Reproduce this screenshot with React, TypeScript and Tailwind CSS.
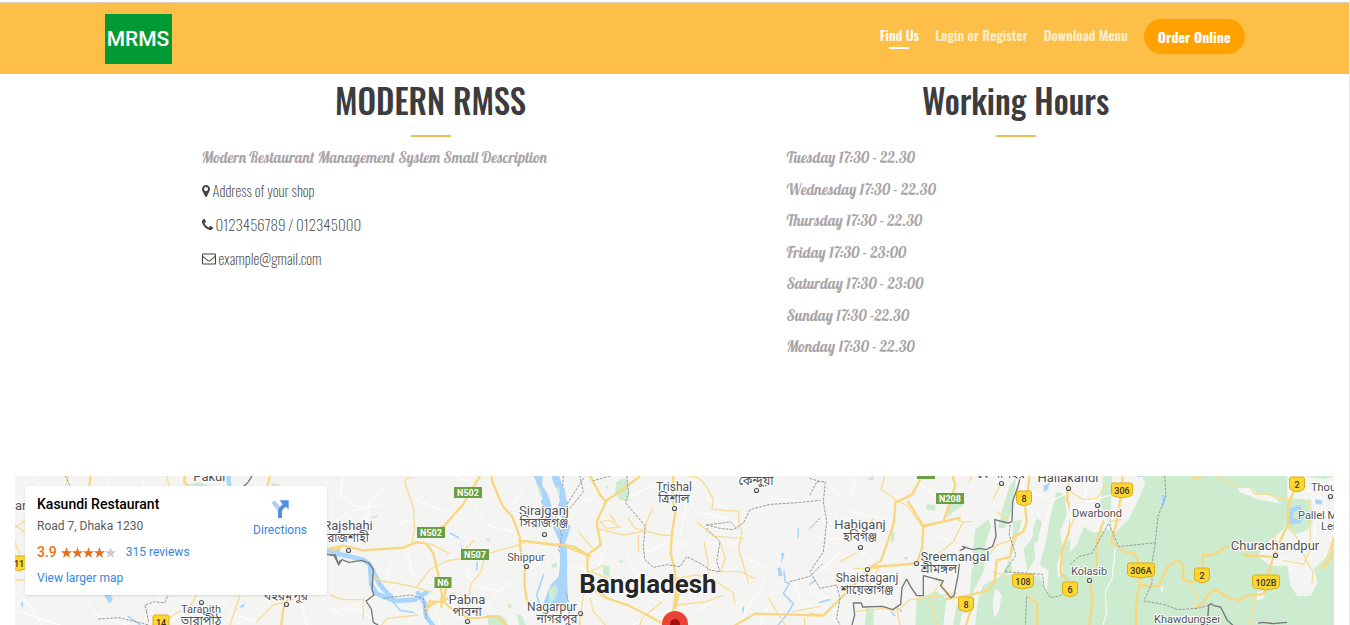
import type { ReactNode } from "react";

const navLinks = [
  { label: "Find Us", href: "#find-us", active: true },
  { label: "Login or Register", href: "#login", active: false },
  { label: "Download Menu", href: "#menu", active: false },
];

const workingHours = [
  "Tuesday 17:30 - 22.30",
  "Wednesday 17:30 - 22.30",
  "Thursday 17:30 - 22.30",
  "Friday 17:30 - 23:00",
  "Saturday 17:30 - 23:00",
  "Sunday 17:30 -22.30",
  "Monday 17:30 - 22.30",
];

interface Tile {
  x: number;
  land?: string[];
  green?: string[];
  water?: string[];
  broad?: string[];
  islands?: string[];
  rivers?: string[];
  street?: string[];
  minor?: string[];
  major?: string[];
  dashed?: string[];
  border?: string[];
}

const tiles: Tile[] = [
  {
    x: 0,
    green: ["M815 52l24 6-2 10h-24z", "M560 60l40-8 30 12h-60z"],
    water: [
      "M678 33h14l2 30h-12z",
      "M312 390l20-4 6 18-10 12z",
      "M64 410l6 2-2 18-4-6z",
      "M716 426l20-12-6 14z",
      "M976 250l44 4v22l-30-6z",
    ],
    rivers: ["M385 455l30 20 10 10", "M810 404l16-14"],
    street: [
      "M90 33l30 30M330 33l-10 30M420 33l14 30M60 440l120 40",
      "M250 390l40 60 90 30M480 390l-30 60M900 390l20 90M960 390l60 60",
      "M45 380l60 60 20 40M660 390l40 60 80 20",
    ],
    minor: [
      "M205 33l-8 30M500 33l8 30",
      "M45 190l30-24M45 180l30 22M45 345h30M45 232l14 36",
      "M720 390l-20 60-10 30M770 470l50-50 60-16M590 390l-20 34-40 20-30 20",
    ],
    major: [
      "M272 33l-4 30M556 33q-10 20 10 30M810 33l-8 30",
      "M870 390l-20 40-6 50",
      "M980 262l40-12",
    ],
    dashed: [
      "M196 33l14 30",
      "M296 462l60-4 60 14 30 8M440 440l-6-20 30-10 30 4 10-24M440 440l6 30",
    ],
    border: ["M756 33q-10 20-24 30", "M980 268l22 4 14 26 4-12"],
  },
  {
    x: 330,
    green: [
      "M115 158l34-10-14 12z",
      "M466 222l16-4-4 12z",
      "M470 450l40 0 20 14 0 16h-54z",
      "M528 418l18 0-4 14z",
      "M560 446l14 4 14 30h-20z",
    ],
    water: [
      "M612 33h26l-2 28 14 20 14 38-4 30-22-46-12-30z",
      "M664 33h24l12 40 8 30-4 40-12-24-8-40-12-20z",
      "M690 300l20-4 2 60 2 50-10 24-44 10-20-26 22-54 24-26z",
      "M390 230l8 22-2 8z",
      "M440 168l-2-4 6 8z",
    ],
    broad: [
      "M0 262l50 10 50 12 20 14 4 60 16 28 54 22 60-4 36-22",
      "M120 300l30 60 40 44M264 384l20 30 4 40 20 26",
      "M640 110l14 34 20 36 22 50M706 110l-4 60-4 60 4 40-4 40",
      "M714 186l-12 40",
    ],
    islands: [
      "M656 372l22-14 6 20-14 30-12 6z",
      "M664 298l18-6-2 14-14 4z",
      "M624 60l8 10 6 30-10-14z",
      "M680 60l8 10 4 26-8-6z",
    ],
    rivers: ["M360 204l26 14", "M442 290l-2 24", "M190 412l20 24 40 6", "M640 330l-20 60 20 60"],
    street: [
      "M40 33l-10 60 70 40M0 180l60-40 90-20 60-60",
      "M160 60l-40 60-20 100M250 100l100 40M260 160l-60 20",
      "M190 280l-20 40 10 30M230 260l20 70 40 10",
      "M430 120l40 60 80 20M470 250l60 20M400 300l30 60 90 20",
      "M590 60l-40 60M600 250l-10 60M720 300l60 20M380 33l60 30",
      "M330 480l-10-40M400 420l-40-50M500 380l-30 50M560 340l-60 40",
      "M140 470l-60-40-80 10",
    ],
    minor: [
      "M250 38q-30-2-24 20l24 70 4 60-8 46",
      "M300 236l60 30",
      "M260 366l40-52 50-26 100-16 110-30 30-14 100 10",
      "M128 320q0 20 30 28l80 14 70 20",
      "M0 390l40 14h60M100 400l0 60",
      "M468 262l-16 60-30 36-10 70",
      "M432 226l-30 30M154 480l20-20 90-10",
      "M748 480l12-90 20-30",
    ],
    major: [
      "M0 250l40-8 60 14 120-8 40-16 30 4 20 30 14 60 12 60-2 40",
      "M450 33l-50 84-60 68",
      "M484 33l4 20 30 70 30 34 22 60 0 28 14 60 0 60 10 60",
      "M300 410l40 0 30-24M290 436l10-30M340 410l40 34 40 16 80-6 30 26",
      "M566 226l140 18 50 20 24 10",
      "M342 400l10-50M340 185l-40 20M290 430l30-20",
    ],
    dashed: ["M700 33l-4 60-20 60 20 60-10 40 20 50-2 60 14 60 0 60", "M760 40l-50 80", "M160 400l80-10 40 10 10 60"],
    border: ["M0 270h16l10 30 10-16 20 8 40-6 20 8 14 20-4 60 6 16-24 18 16 24 6 40 14 8"],
  },
  {
    x: 560,
    green: [
      "M168 52l26-14 12 20 2 50-30-4-12-20z",
      "M128 304l20-2v34l-18-6z",
      "M136 60l8 4-2 10z",
      "M172 288l16-2 0 8z",
    ],
    water: [
      "M0 60l14 10 6 50-20 20z",
      "M0 240l20-4 2 60-4 60 2 50-20 24z",
      "M712 190h5v28l-4 2z",
      "M664 262l10 4-10 28zM652 310l10-4 6 28-12 0z",
      "M546 430l6-8 0 18-4 4z",
    ],
    rivers: ["M24 190l-10 30-8 20", "M672 320l4 30 12 6-18 30 30 30-20 34-26 30"],
    street: [
      "M60 110l40-10 40 40M200 100l80-40 60 40M350 60l60 80 100 20",
      "M420 60l-40 60-20 90M260 260l70-30 60 10M440 100l60 30",
      "M520 60l60-20 60 60 90 10M560 180l-40 60-90-10",
      "M620 340l-60 90-20 50M700 330l20 80 60 20M400 440l60-30",
      "M140 240l-40 100M60 300l60 80M200 270l30 60 80 20M540 270l80 40",
      "M220 480l60-40 60 30M600 480l30-70",
    ],
    minor: [
      "M120 170l30-4 30 20-40 4zM150 150l16 20M110 190l80 20 60-10 14-40 14-30",
      "M205 160l20 30 80 20 28 2M234 210l2 50",
      "M58 204l40 46M92 320l50 20M130 300l-46 24",
      "M388 33q30 0 50 30l22 40-4 30 80 6 0 36 10 20-10 60 10 30 20 70",
      "M410 170l50 44 90 6M432 230l12 60 0 40M480 230l16 50-14 40 60 0 40 20",
      "M350 340l60-10 50 14 60 40 4 30M350 420l90-10 50-20",
      "M240 480l6-20 60-50M626 400l30 50 20 30M734 480l0-20",
      "M60 440l0 40M700 440l80-16",
      "M90 400l10 40 36 40",
    ],
    major: [
      "M90 33l30 56 16 20 36-24 66-50",
      "M138 110l-28 60 12 70-40 30 0 44 20 60 40 26 60 20 60 30 60 34",
      "M340 33l-4 60 10 50-10 60-4 60 14 60 2 60-14 96",
      "M0 240l40 4 44 26",
      "M526 480l60-34 90 2 104 4",
      "M360 370l-14 60",
    ],
    dashed: [
      "M200 33l6 50-10 30 60 70-6 60 4 40 26 24 40-8 40 6 20-30 40 20 30 20 30 6",
      "M440 180l40 10 40 4 30-20 20-40 60-16 70-4 80-8M440 190l40 40-10 60 10 30",
      "M440 180l50-6 20-4 20 20",
      "M30 130l40-50-10-46M150 33l-50 14",
      "M780 160l-30 30M690 350l60-16 40-40M750 40l30 10",
    ],
  },
  {
    x: 810,
    green: [
      "M352 116l26 6-4 16-26-6z",
      "M176 36l16-3-2 12h-16z",
      "M244 200l10 0-4 30-8 4z",
      "M280 276h14l-4 16z",
      "M420 110l40-10 0 20-30 20-20 20z",
      "M600 60l18-20-10 90-24 60-20 0 14-60z",
      "M495 195l40-32 8 20-16 50-4 80-24 50-20 36 6-90z",
      "M610 170l30-8 4 50-40 110-30 10 30-60z",
      "M740 80l24 10 6 60-20 50 10 60-40 60-30-20 20-80 10-60z",
      "M680 160l16 10-14 60-20 10 4-40z",
      "M640 250l30-30 6 60-24 40z",
      "M320 400l60-20 30 20-10 80h-84z",
      "M170 430l20 0 0 50h-26z",
      "M520 360l60-30 60-4 50 10 24 50 40-10 56-96v200H495l10-80z",
      "M780 220l30-40v300h-110l20-200z",
      "M440 420l20 0-10 60h-20z",
    ],
    land: [
      "M556 370l20 20-10 50-14 20-4-50z",
      "M640 150l20 0 10 60-40 60-20 50-10-30z",
      "M740 300l14-40 6 60-16 20z",
      "M780 170l14-50 16-10v60z",
    ],
    water: ["M700 62l14-6 2 16-14 10z"],
    rivers: ["M0 358l16-12M30 412l30-8", "M710 66l10-14", "M244 442l10 10M264 430l10 8"],
    street: [
      "M60 60l60 80 100 20M140 33l-20 60M330 60l60 40 60 10",
      "M60 220l80 10 60 70M240 340l60-60M380 210l80 40 30 60",
      "M20 300l60 20M90 260l-60 60M480 60l60 60M400 300l-60 70",
      "M500 130l-60 60M640 33l0 60M720 110l60-30M40 420l60 20",
      "M700 200l20-80M620 60l90 40M0 380l60 20",
    ],
    minor: [
      "M224 33l-10 40 40 30 40 20 20 30 24 34",
      "M90 290l50-26M190 160l-20 30M484 33l-6 20",
      "M430 160l30 10 24 0M460 170l-30 60-50 40-60 20",
      "M560 140l30 20M570 60l-20 40M620 220l-60 20-40 50",
      "M130 310l70 0M100 390l70-20 40-66",
      "M130 440l90-10 40 10 40-36 80-10 60-10M380 370l-20 30 20 80",
      "M550 320l40 14M260 430l10 50M380 340l40 50",
      "M780 130l-10-40 10-57M810 140l-40-60",
    ],
    major: [
      "M336 33l-30 56-50 24-4 60-20 60-20 56-30 16",
      "M186 306l80-6 60-6",
      "M340 190l-4 60-14 40M294 110l26 40 20 34 60-14 20-60 16-50-8-27",
      "M340 182l60-12 50-12",
      "M0 446l40 6 60-60 60-60 20-24",
      "M658 33l-6 66M646 130l4 40-10 30-30 16-10 60-40 10-6 60-20 30-60 16-64 10",
      "M484 430l-16 50M656 396l26 20 0 64M774 64l-4 40 16 40-10 60-20 50-4 70 20 20",
    ],
    dashed: [
      "M0 90l20-40 26 0-6 60 10 60-10 90-40 60 30 50 50-10 10 40-10 60 10 20",
      "M600 180l-2 30 20 60-34 50 60 4 54 4 4 40 20 30 30-6 20-30 38-40",
      "M650 396l-4 84",
    ],
    border: [
      "M126 480l8-30-4-36 24 0 4 12 60-2 30 10 24-16 4-50 14-26 10 20 20 30 20 0 0-60 60 16-8 14 30 36 10-6 12-60 4-34",
      "M450 256l14-6-6-6 30 10 20-4 20 4 20-10 10-30-4-50 40 10 12-4 2-60 16-46 6-24",
    ],
  },
  {
    x: 1070,
    green: ["M0 33H792v447H0z"],
    land: [
      "M0 33h100l-10 90 30 50 0 20-50 10-70-40z",
      "M126 33h90l10 20-20 50-30 60-30 30-20 20-4-60z",
      "M0 130l40 60-20 50-20 20z",
      "M652 33l60 0 50 10 30-10v220l-60 60 10 40-20 40-40 0-20-30-10-60-50 0-40-30 30-40 50-40 10-60z",
      "M560 384l20-10 4 24-24 10z",
      "M500 66l40 0 24 20 50 6 16 24-70-14-50-20z",
      "M270 370l12-10-6 28z",
    ],
    islands: ["M630 120l30-20 60 4 10 60-20 34-40 10-30-30z"],
    water: ["M276 90l10 0 0 24-10 14z", "M772 98l8 0 0 10z", "M200 33h20l-14 4z"],
    broad: ["M664 136l22-8 10 24-8 16-26 2zM742 110l8 2"],
    street: [
      "M136 250l-10 90-20 40 4 60-10 40",
      "M0 90l60 20 60-20M160 130l-40 30M690 60l60 40M680 210l-60 60 60 30 60-30",
      "M740 130l-10 120M60 33l-20 70",
    ],
    minor: [
      "M0 80l40 24 40-4 30-40M120 170l34-6M610 200l10 40M660 180l30 60 20 50 20 30 -4 34",
      "M640 286l60 12 20-40 2-150M530 270l70 6M790 220l-30 90",
      "M440 33l40 20 20 14 40 0 14 20 40 0 30 14 30 0",
      "M355 360l26 30-10 40M540 480l10-60 10-30M0 190l20-50",
    ],
    major: [
      "M158 33l-6 60-8 60-20 80 20 10 20 20 30 0 14 40 0 60-10 60 0 57",
      "M100 170l-20 60 0 80M60 350l8 60-10 70",
      "M204 360l60 4 30-60 30-20 16 20 0 40 30 8 26-40",
      "M396 310l4-40 30 0 40-26 30 0M520 270l90 6-14 50-14 60-60 8-14 14-40-14-30-20-20 10-20 30-20 14",
      "M680 60l-26 60 0 60-20 40-20 50M792 220l-10 60-26 30",
      "M370 40l20-4",
    ],
    dashed: [
      "M284 33l4 60-24 60-8 80-110 12-30-70-50 90-40 10-26 24",
      "M256 234l-10 60 0 60-24 54 60 10 40 16 60-4 40-10",
    ],
    border: ["M412 480l4-60 8-4 8 6 20 4 20 40 16 14", "M566 474l14-2 30 4 40-4"],
  },
];

interface Place {
  x: number;
  y: number;
  text: string;
  size: number;
  bn?: string;
  bnX?: number;
  dot?: [number, number];
  start?: boolean;
}

const places: Place[] = [
  { x: 210, y: 481, text: "Pakur", size: 13 },
  { x: 15, y: 510, text: "ar", size: 13, start: true },
  { x: 348, y: 530, text: "Rajshahi", size: 13, bn: "রাজশাহী", dot: [348, 550] },
  { x: 286, y: 588, text: "", size: 13, bn: "বহরমপুর", dot: [286, 604] },
  { x: 201, y: 613, text: "Tarapith", size: 11, bn: "তারাপীঠ", dot: [201, 602] },
  { x: 544, y: 515, text: "Sirajganj", size: 13, bn: "সিরাজগঞ্জ", dot: [544, 534] },
  { x: 526, y: 561, text: "Shippur", size: 11, dot: [526, 566] },
  { x: 467, y: 604, text: "Pabna", size: 13, bn: "পাবনা", dot: [467, 621] },
  { x: 552, y: 611, text: "Nagarpur", size: 12, bn: "নাগরপুর", bnX: 557, dot: [580, 613] },
  { x: 674, y: 491, text: "Trishal", size: 12, bn: "ত্রিশাল", dot: [674, 508] },
  { x: 756, y: 473, text: "", size: 12, bn: "কেন্দুয়া", dot: [756, 490] },
  { x: 860, y: 529, text: "Habiganj", size: 13, bn: "হবিগঞ্জ", dot: [860, 547] },
  { x: 955, y: 561, text: "Sreemangal", size: 13, bn: "শ্রীমঙ্গল", bnX: 939, dot: [916, 563] },
  { x: 867, y: 582, text: "Shaistaganj", size: 12, bn: "শায়েস্তাগঞ্জ", dot: [867, 569] },
  { x: 1001, y: 466, text: "", size: 12, bn: "কৈলাশহর", dot: [1001, 483] },
  { x: 1068, y: 482, text: "Hailakandi", size: 13, dot: [1068, 488] },
  { x: 1097, y: 517, text: "Dwarbond", size: 11, dot: [1097, 505] },
  { x: 1089, y: 575, text: "Kolasib", size: 11, dot: [1089, 580] },
  { x: 1275, y: 550, text: "Churachandpur", size: 13, dot: [1275, 555] },
  { x: 1187, y: 623, text: "Khawdungsei", size: 11 },
  { x: 1311, y: 491, text: "Thoubal", size: 11, start: true, dot: [1330, 496] },
  { x: 1298, y: 519, text: "Pallel M", size: 11, start: true },
  { x: 1321, y: 530, text: "Lei", size: 11, start: true },
];

const nationalRoads = [
  { x: 468, y: 492, w: 28, text: "N502" },
  { x: 431, y: 532, w: 28, text: "N502" },
  { x: 475, y: 554, w: 28, text: "N507" },
  { x: 443, y: 582, w: 17, text: "N6" },
  { x: 950, y: 498, w: 28, text: "N208" },
  { x: 926, y: 473, w: 18, text: "" },
];

const shields = [
  { x: 19, y: 563, w: 15, text: "11" },
  { x: 161, y: 622, w: 16, text: "14" },
  { x: 1024, y: 498, w: 15, text: "8" },
  { x: 966, y: 604, w: 15, text: "8" },
  { x: 1023, y: 581, w: 21, text: "108" },
  { x: 1070, y: 589, w: 15, text: "6" },
  { x: 1122, y: 490, w: 21, text: "306" },
  { x: 1141, y: 570, w: 27, text: "306A" },
  { x: 1202, y: 575, w: 15, text: "2" },
  { x: 1266, y: 582, w: 27, text: "102B" },
  { x: 1297, y: 484, w: 15, text: "2" },
];

function MapDrawing() {
  return (
    <svg
      className="absolute inset-0 h-full w-full"
      viewBox="15 476 1319 149"
      preserveAspectRatio="xMidYMin slice"
      role="img"
      aria-label="Map of Bangladesh"
    >
      <rect x="15" y="476" width="1319" height="149" fill="#f4f4f3" />
      {tiles.map((t) => (
        <g
          key={t.x}
          transform={`translate(${t.x} 465) scale(${1 / 3})`}
          fill="none"
          strokeLinejoin="round"
          strokeLinecap="round"
        >
          <path d={t.green?.join("")} fill="#cdebcf" />
          <path d={t.land?.join("")} fill="#f4f4f3" />
          <path d={t.water?.join("")} fill="#a9d5fb" />
          <path d={t.islands?.join("")} fill="#cdebcf" />
          <path d={t.broad?.join("")} stroke="#a9d5fb" strokeWidth="14" />
          <path d={t.rivers?.join("")} stroke="#a9d5fb" strokeWidth="5" />
          <path d={t.street?.join("")} stroke="#ffffff" strokeWidth="3" />
          <path d={t.minor?.join("")} stroke="#f8dd93" strokeWidth="4" />
          <path d={t.major?.join("")} stroke="#f8d77f" strokeWidth="7" />
          <path d={t.dashed?.join("")} stroke="#9a9a9f" strokeWidth="3" strokeDasharray="6 6" />
          <path d={t.border?.join("")} stroke="#77777a" strokeWidth="4" />
        </g>
      ))}

      {nationalRoads.map((r, i) => (
        <g key={i}>
          <rect x={r.x - r.w / 2} y={r.y - 5} width={r.w} height="11" fill="#68a043" />
          <text x={r.x} y={r.y + 4} textAnchor="middle" fontSize="9" fontWeight="700" fill="#fff">
            {r.text}
          </text>
        </g>
      ))}

      {shields.map((s, i) => (
        <g key={i}>
          <path
            transform={`translate(${s.x - s.w / 2} ${s.y - 7})`}
            d={`M2 0H${s.w - 2}q2 0 2 2v8q0 2-2 3L${s.w / 2} 15 2 13q-2-1-2-3V2q0-2 2-2z`}
            fill="#fdd633"
            stroke="#dcae14"
            strokeWidth="1"
          />
          <text x={s.x} y={s.y + 4} textAnchor="middle" fontSize="9" fontWeight="500" fill="#3b3523">
            {s.text}
          </text>
        </g>
      ))}

      {places.map((p, i) => (
        <g key={i} fill="#505256" stroke="#fff" strokeWidth="2" style={{ paintOrder: "stroke" }}>
          {p.dot && (
            <circle
              cx={p.dot[0] + 0.5}
              cy={p.dot[1] + 0.5}
              r="2"
              fill="#fff"
              stroke="#505256"
              strokeWidth="1.2"
              style={{ paintOrder: "normal" }}
            />
          )}
          <text x={p.x} y={p.y} fontSize={p.size} textAnchor={p.start ? "start" : "middle"}>
            {p.text}
          </text>
          {p.bn && (
            <text x={p.bnX ?? p.x} y={p.y + 12} fontSize="12" textAnchor="middle">
              {p.bn}
            </text>
          )}
        </g>
      ))}

      <text
        x="648"
        y="593"
        textAnchor="middle"
        fontSize="26"
        fontWeight="700"
        fill="#262626"
        stroke="#fff"
        strokeWidth="2"
        style={{ paintOrder: "stroke" }}
      >
        Bangladesh
      </text>
      <circle cx="675" cy="624" r="13" fill="#ea4335" />
      <circle cx="675" cy="624" r="5" fill="#a50e0e" />
    </svg>
  );
}

function Star({ on }: { on: boolean }) {
  return (
    <svg width="11" height="11" viewBox="0 0 24 24" fill={on ? "#e7711b" : "#c8ccd0"} aria-hidden="true">
      <path d="M12 0l3 9h9l-7 6 3 9-8-6-8 6 3-9-7-6h9z" />
    </svg>
  );
}

function PlaceCard() {
  return (
    <div className="absolute top-[10px] left-[10px] flex w-[302px] justify-between rounded-xs bg-white px-3 pt-2 pb-[7px] text-xs leading-5 shadow">
      <div>
        <p className="text-sm leading-5 font-medium text-black">Kasundi Restaurant</p>
        <p className="mt-[2px] text-[#5b5b5b]">Road 7, Dhaka 1230</p>
        <div className="mt-[6px] flex items-center">
          <span className="mr-1 text-sm leading-5 font-medium text-[#e7711b]">3.9</span>
          {[1, 2, 3, 4, 5].map((n) => (
            <Star key={n} on={n < 5} />
          ))}
          <a href="#reviews" className="ml-[10px] text-[#3a84df]">
            315 reviews
          </a>
        </div>
        <a href="#map" className="mt-[6px] block text-[#3a84df]">
          View larger map
        </a>
      </div>
      <a href="#directions" className="mr-2 flex flex-col items-center pt-[6px] text-[#3a84df]">
        <svg width="20" height="18" viewBox="0 0 60 54" aria-hidden="true">
          <path d="M4 9l9-8 20 20-9 12z" fill="#b3cdf6" />
          <path d="M24 54V33q0-6 5-11l9-9-9-12h27v27l-9-8-8 8q-3 3-3 8v18z" fill="#5090e3" />
        </svg>
        <span className="mt-[2px]">Directions</span>
      </a>
    </div>
  );
}

function Heading({ children }: { children: ReactNode }) {
  return (
    <>
      <h2 className="text-center text-[33px] leading-[54px] font-medium text-[#3c3c3e]">{children}</h2>
      <div className="mx-auto mt-[7px] h-[2px] w-10 bg-[#edbd5a]" />
    </>
  );
}

export default function App() {
  return (
    <div className="flex min-h-screen flex-col border-r border-gray-200 bg-white pt-[2px] font-['Oswald','Liberation_Sans_Narrow',sans-serif]">
      <header className="border-t border-[#dccfb4] bg-[#fdbf48]">
        <div className="mx-auto flex h-[71px] max-w-[1140px] items-center justify-between">
          <a
            href="#home"
            className="flex h-[50px] w-[67px] items-center justify-center bg-[#029a35] font-['Roboto',sans-serif] text-[21px] leading-6 font-medium text-white"
          >
            MRMS
          </a>
          <nav className="flex items-center gap-4 pb-1 text-sm leading-6">
            {navLinks.map((link) => (
              <a
                key={link.label}
                href={link.href}
                className={`relative pb-1 font-medium ${link.active ? "text-white" : "text-[#fff0d0]"}`}
              >
                {link.label}
                {link.active && (
                  <span className="absolute bottom-[2px] left-1/2 h-[2px] w-5 -translate-x-1/2 bg-white" />
                )}
              </a>
            ))}
            <button className="h-[35px] rounded-full bg-[#ffa200] px-[14px] font-bold text-white">Order Online</button>
          </nav>
        </div>
      </header>

      <section id="find-us" className="mx-auto grid w-full max-w-[1170px] grid-cols-2 pb-[119px]">
        <div className="pr-[15px] pl-[112px]">
          <Heading>MODERN RMSS</Heading>
          <p className="mt-[10px] font-['Lobster','Liberation_Serif',serif] text-[15px] leading-[21px] text-[#aaa6a8]">
            Modern Restaurant Management System Small Description
          </p>
          <ul className="mt-3 flex flex-col gap-[13px] text-[15px] leading-[21px] font-extralight text-[#444]">
            <li className="flex items-center gap-[3px]">
              <svg width="8" height="12" viewBox="384 128 1024 1536" fill="currentColor" aria-hidden="true">
                <path d="M1152 640q0-106-75-181t-181-75-181 75-75 181 75 181 181 75 181-75 75-181zm256 0q0 109-33 179l-364 774q-16 33-47.5 52t-67.5 19-67.5-19-46.5-52l-365-774q-33-70-33-179 0-212 150-362t362-150 362 150 150 362z" />
              </svg>
              Address of your shop
            </li>
            <li className="flex items-center gap-[3px]">
              <svg width="11" height="11" viewBox="192 128 1408 1408" fill="currentColor" aria-hidden="true">
                <path d="M1600 1240q0 27-10 70.5t-21 68.5q-21 50-122 106-94 51-186 51-27 0-53-3.5t-57-12.5-47-14.5-55.5-20.5-49.5-18q-98-35-175-83-127-79-264-216t-216-264q-48-77-83-175-3-9-18-49.5t-20.5-55.5-14.5-47-12.5-57-3.5-53q0-92 51-186 56-101 106-122 25-11 68.5-21t70.5-10q14 0 21 3 18 6 53 76 11 19 30 54t35 63.5 31 53.5q3 4 17.5 25t21.5 35.5 7 28.5q0 20-28.5 50t-62 55-62 53-28.5 46q0 9 5 22.5t8.5 20.5 14 24 11.5 19q76 137 174 235t235 174q2 1 19 11.5t24 14 20.5 8.5 22.5 5q18 0 46-28.5t53-62 55-62 50-28.5q14 0 28.5 7t35.5 21.5 25 17.5q25 15 53.5 31t63.5 35 54 30q70 35 76 53 3 7 3 21z" />
              </svg>
              0123456789 / 012345000
            </li>
            <li className="flex items-center gap-[3px]">
              <svg width="14" height="12" viewBox="0 256 1792 1408" fill="currentColor" aria-hidden="true">
                <path d="M1664 1504v-768q-32 36-69 66-268 206-426 338-51 43-83 67t-86.5 48.5-102.5 24.5h-2q-48 0-102.5-24.5t-86.5-48.5-83-67q-158-132-426-338-37-30-69-66v768q0 13 9.5 22.5t22.5 9.5h1472q13 0 22.5-9.5t9.5-22.5zm0-1051v-24.5l-.5-13-3-12.5-5.5-9-9-7.5-14-2.5h-1472q-13 0-22.5 9.5t-9.5 22.5q0 168 147 284 193 152 401 317 6 5 35 29.5t46 37.5 44.5 31.5 50.5 27.5 43 9h2q20 0 43-9t50.5-27.5 44.5-31.5 46-37.5 35-29.5q208-165 401-317 54-43 100.5-115.5t46.5-131.5zm128-37v1088q0 66-47 113t-113 47h-1472q-66 0-113-47t-47-113v-1088q0-66 47-113t113-47h1472q66 0 113 47t47 113z" />
              </svg>
              example@gmail.com
            </li>
          </ul>
        </div>

        <div className="pr-[15px] pl-[112px]">
          <Heading>Working Hours</Heading>
          <ul className="mt-[10px] flex h-[210px] flex-col justify-between font-['Lobster','Liberation_Serif',serif] text-[15px] leading-[21px] text-[#aaa6a8]">
            {workingHours.map((line) => (
              <li key={line}>{line}</li>
            ))}
          </ul>
        </div>
      </section>

      <section className="flex flex-1 px-[15px]">
        <div className="relative min-h-[149px] flex-1 overflow-hidden font-['Roboto','Noto_Sans_Bengali','Noto_Sans',sans-serif]">
          <MapDrawing />
          <PlaceCard />
        </div>
      </section>
    </div>
  );
}
